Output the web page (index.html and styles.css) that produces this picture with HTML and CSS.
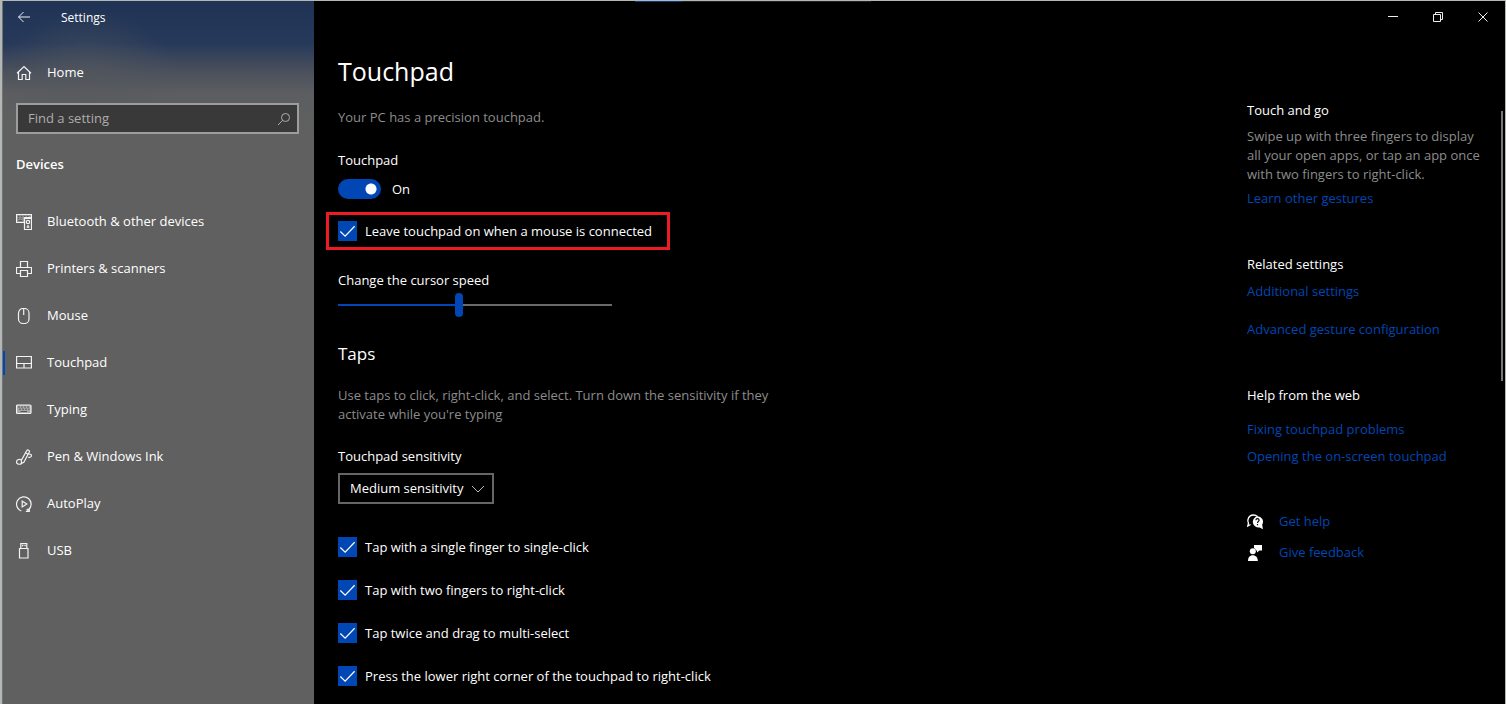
FILE: index.html
```html
<!DOCTYPE html>
<html lang="en">
<head>
<meta charset="utf-8">
<title>Settings</title>
<link rel="stylesheet" href="styles.css">
</head>
<body>
<div class="window">
  <div class="sidebar">
    <header class="side-title">
      <button class="back" aria-label="Back"><svg width="14" height="12" viewBox="0 0 14 12"><path d="M6.500 1L1.500 6l5 5M1.500 6H13"/></svg></button>
      <span>Settings</span>
    </header>
    <a class="nav-item home" href="#"><svg class="icon" viewBox="0 0 16 16"><path d="M1 8.200L8 1.500l7 6.700M2.500 7v7.500h3.700V9.500h3.600v5h3.700V7"/></svg>Home</a>
    <div class="search">
      <input type="text" placeholder="Find a setting" aria-label="Find a setting">
      <svg width="14" height="14" viewBox="0 0 14 14"><circle cx="8.500" cy="5.500" r="4"/><path d="M5.700 8.300L1 13"/></svg>
    </div>
    <h2 class="side-heading">Devices</h2>
    <nav class="nav">
      <a class="nav-item" href="#"><svg class="icon" viewBox="0 0 16 16"><path d="M.5.5h15v3H8.500v5h-8z" fill="#fff" fill-opacity=".3"/><path class="keys" d="M2 2.500h1.500M5 2.500h1.500M8 2.500h1.500M11 2.500h1.500M2 4.500h1M4.500 4.500h1M2.500 6.500h4"/><path d="M8.500 4.500h7v11h-7z"/><circle cx="12" cy="8" r="1.700"/><path d="M12 11v3M10.500 13h3"/></svg>Bluetooth &amp; other devices</a>
      <a class="nav-item" href="#"><svg class="icon" viewBox="0 0 16 16"><path d="M4.500 6.500v-6h7v6M4.500 12.500h-4v-6h15v6h-4M4.500 9.500h7v6h-7z"/></svg>Printers &amp; scanners</a>
      <a class="nav-item" href="#"><svg class="icon" viewBox="0 0 16 16"><rect x="2.500" y=".5" width="10.500" height="15" rx="4.500"/><path d="M7.700 1v6"/></svg>Mouse</a>
      <a class="nav-item active" href="#" aria-current="page"><svg class="icon" viewBox="0 0 16 16"><path d="M.6 1.500h14.800v11.500H.6zM.6 8.500h14.800M8 8.500v4.500"/></svg>Touchpad</a>
      <a class="nav-item" href="#"><svg class="icon" viewBox="0 0 16 16"><rect x=".5" y="3" width="14.500" height="8.500" rx="1" fill="#fff" fill-opacity=".45"/><path class="keys" d="M2 5h2M5 5h2M8 5h2M11 5h2M3 7.200h2M6 7.200h2M9 7.200h2M12 7.200h1.500M4.500 9.500h6.500"/></svg>Typing</a>
      <a class="nav-item" href="#"><svg class="icon" viewBox="0 0 16 16"><path d="M5.500 14.500L5.300 11.500 10.800 1.500c.8-1.200 3.200 0 2.500 1.400L8 13z"/><path d="M5.500 14.500c-2 1.500-5 .6-5-1.400 0-2.300 2.300-3.200 4.700-2.400M12.500 4.800c2.500.3 3.500 1.300 2.900 2.500-.6 1-2.200 1.200-3.200.9M9.500 3.700l2.500 1.500"/></svg>Pen &amp; Windows Ink</a>
      <a class="nav-item" href="#"><svg class="icon" viewBox="0 0 16 16"><path d="M5.300 15A7.300 7.300 0 1 1 12.200 14M9.800 15.400h3.500v-3.600M12.200 14.600L10.800 13M6.200 5v6l4.600-3z"/></svg>AutoPlay</a>
      <a class="nav-item" href="#"><svg class="icon" viewBox="0 0 16 16"><path d="M3.500 5.500h8.500v9.500H3.500zM4.800 5.500V.6h6v4.900M6 2.700h1.300M8.400 2.700h1.300"/></svg>USB</a>
    </nav>
  </div>

  <div class="pane">
    <header class="controls">
      <button aria-label="Minimize"><svg width="12" height="12" viewBox="0 0 12 12"><path d="M1 5.500h10"/></svg></button>
      <button aria-label="Restore"><svg width="12" height="12" viewBox="0 0 12 12"><path d="M1.500 3.500h7v7h-7zM3.500 3.500v-2h7v7h-2"/></svg></button>
      <button aria-label="Close"><svg width="12" height="12" viewBox="0 0 12 12"><path d="M1.500 1.500l9 9M10.500 1.500l-9 9"/></svg></button>
    </header>
    <div class="content">
      <main class="settings">
        <h1>Touchpad</h1>
        <p class="muted intro">Your PC has a precision touchpad.</p>
        <label class="label" for="power">Touchpad</label>
        <div class="toggle-row"><input id="power" class="toggle" type="checkbox" role="switch" checked><span>On</span></div>
        <label class="check highlighted"><input type="checkbox" checked>Leave touchpad on when a mouse is connected</label>
        <label class="label speed-label" for="speed">Change the cursor speed</label>
        <input id="speed" class="slider" type="range" min="0" max="100" value="44">
        <h2>Taps</h2>
        <p class="muted description">Use taps to click, right-click, and select. Turn down the sensitivity if they activate while you're typing</p>
        <label class="label" for="sensitivity">Touchpad sensitivity</label>
        <select id="sensitivity"><option>Medium sensitivity</option></select>
        <div class="checks">
          <label class="check"><input type="checkbox" checked>Tap with a single finger to single-click</label>
          <label class="check"><input type="checkbox" checked>Tap with two fingers to right-click</label>
          <label class="check"><input type="checkbox" checked>Tap twice and drag to multi-select</label>
          <label class="check"><input type="checkbox" checked>Press the lower right corner of the touchpad to right-click</label>
        </div>
      </main>
      <aside class="related">
        <section class="tips">
          <h3>Touch and go</h3>
          <p class="muted">Swipe up with three fingers to display all your open apps, or tap an app once with two fingers to right-click.</p>
          <a href="#">Learn other gestures</a>
        </section>
        <section class="links wide">
          <h3>Related settings</h3>
          <a href="#">Additional settings</a>
          <a href="#">Advanced gesture configuration</a>
        </section>
        <section class="links web">
          <h3>Help from the web</h3>
          <a href="#">Fixing touchpad problems</a>
          <a href="#">Opening the on-screen touchpad</a>
        </section>
        <section class="support">
          <a href="#"><svg width="16" height="16" viewBox="0 0 16 16"><path d="M3.500 10.500L.8 12l.7-3A4.800 4.800 0 0 1 1 5.500C1.700 2.700 4 1 6.500 1c1.700 0 3 .6 4 1.500" fill="none" stroke="#fff" stroke-width="1.300"/><path d="M10.500 2.200a5.500 5.500 0 0 1 4.700 8.300l.7 4.700-3.200-1.700A5.500 5.500 0 1 1 10.500 2.200z" fill="#fff"/><path d="M8.900 6.200c0-2 3.200-2 3.200 0 0 1.200-1.600 1.200-1.600 2.700M10.500 10v1.300" fill="none" stroke="#000" stroke-width="1.200"/></svg>Get help</a>
          <a href="#"><svg width="16" height="16" viewBox="0 0 16 16"><path d="M7 0h8v5.500h-2.500L10 7.500v-2H9A3.800 3.800 0 0 0 7 3z" fill="#fff"/><circle cx="5.800" cy="6.300" r="3" fill="#fff"/><path d="M1 16c0-3.500 1.800-5.700 4.800-5.700s5 2.200 5 5.700z" fill="#fff"/></svg>Give feedback</a>
        </section>
      </aside>
    </div>
    <div class="loading"></div>
    <div class="scrollbar"></div>
  </div>
</div>
</body>
</html>
```
FILE: styles.css
```css
* { box-sizing: border-box; }
body {
  margin: 0;
  background: #000;
  color: #fff;
  font: 13px/19px "Open Sans", "Noto Sans", sans-serif;
}
h1, h2, h3, p { margin: 0; font-weight: 400; }
a { color: #0046b4; text-decoration: none; }
button { border: 0; padding: 0; background: none; color: inherit; font: inherit; }
svg { flex: none; display: block; }
.window {
  display: flex;
  height: 100vh;
  overflow: hidden;
  border: solid #b4b8b5;
  border-width: 1px 1px 0 2px;
}

/* Sidebar */
.sidebar {
  flex: none;
  width: 312px;
  border-left: 1px solid #707474;
  background:
    radial-gradient(ellipse 90px 65px at 85px 75px, #55585d99, #5b5d6000),
    linear-gradient(#203354 0, #26395a 42px, #4a505c 70px, #5b5d60 92px, #606060 130px);
}
.side-title { display: flex; align-items: center; gap: 30px; height: 32px; padding-left: 14px; font-size: 12px; }
.back svg, .controls svg { fill: none; stroke: #eee; stroke-width: 1; }
.back { width: 14px; }
.nav-item { display: flex; align-items: center; gap: 15px; height: 47px; padding-left: 13px; color: #fff; }
.icon { width: 16px; height: 16px; fill: none; stroke: #f2f2f2; stroke-width: 1.200; }
.keys { stroke: #555; stroke-width: 1; }
.home { margin: 16px 0 7px; }
.search { display: flex; align-items: center; height: 31px; margin: 0 15px 0 13px; padding-right: 6px; border: 2px solid #9d9d9d; background: #393939; }
.search input { flex: 1; min-width: 0; padding: 0 10px; border: 0; outline: 0; background: none; color: #fff; font: inherit; }
.search input::placeholder { color: #adadad; opacity: 1; }
.search svg { fill: none; stroke: #adadad; }
.side-heading { margin: 21px 0 24px 13px; font-size: 13px; font-weight: 600; }
.active { background: linear-gradient(#0046b4, #0046b4) 0 50% / 2px 24px no-repeat; }

/* Content pane */
.pane { position: relative; flex: 1; min-width: 0; }
.controls { display: flex; justify-content: flex-end; height: 32px; }
.controls button { display: grid; place-items: center; width: 45px; }
.content { display: flex; justify-content: space-between; padding-left: 24px; }
.settings { display: flex; flex-direction: column; align-items: flex-start; width: 440px; padding-top: 20px; }
.settings h1 { font-size: 25px; line-height: 36px; }
.muted { color: #8c8c8c; }
.intro { margin: 19px 0 24px; }
.toggle-row { display: flex; align-items: center; gap: 11px; height: 20px; margin: 9px 0 13px; }
.toggle { appearance: none; width: 43px; height: 20px; margin: 0; border-radius: 10px; background: radial-gradient(circle at 33px 10px, #fff 5px, #0046b4 6px); }
.check { display: flex; align-items: center; gap: 8px; white-space: nowrap; }
.check input {
  appearance: none;
  width: 19px;
  height: 20px;
  margin: 0;
  background: #0046b4 url("data:image/svg+xml,%3Csvg xmlns='http://www.w3.org/2000/svg' viewBox='0 0 20 20'%3E%3Cpath d='M2.500 10.500l5 5L17.500 5' fill='none' stroke='white' stroke-width='1.300'/%3E%3C/svg%3E") center / 19px 20px;
}
.highlighted { height: 38px; margin-left: -12px; padding: 0 15px 0 9px; border: 3px solid #ed1c24; }
.speed-label { margin-top: 21px; }
.slider { appearance: none; width: 274px; height: 24px; margin: 3px 0 23px; background: linear-gradient(90deg, #0046b4 45%, #6a6a6a 45%) center / 100% 2px no-repeat; }
.slider::-webkit-slider-thumb { appearance: none; width: 8px; height: 24px; border-radius: 4px; background: #0046b4; }
.settings h2 { font-size: 17px; line-height: 28px; }
.description { margin: 18px 0 23px; }
select {
  appearance: none;
  height: 31px;
  margin: 7px 0 33px;
  padding: 0 28px 0 10px;
  border: 2px solid #666;
  border-radius: 0;
  background: #000 url("data:image/svg+xml,%3Csvg xmlns='http://www.w3.org/2000/svg' viewBox='0 0 14 8'%3E%3Cpath d='M1 1l6 6 6-6' fill='none' stroke='%23bbb'/%3E%3C/svg%3E") right 7px center / 14px 8px no-repeat;
  color: #fff;
  font: inherit;
}
.checks { display: flex; flex-direction: column; gap: 23px; }

/* Related links */
.related { flex: none; width: 258px; padding: 68px 18px 0 0; }
.related h3 { font-size: 13px; }
.related a { display: block; }
.tips p { margin: 7px 0 5px; }
.tips { margin-bottom: 47px; }
.links { display: flex; flex-direction: column; }
.wide { gap: 19px; margin-bottom: 47px; }
.wide h3 { margin-bottom: -11px; }
.web { gap: 8px; margin-bottom: 46px; }
.web h3 { margin-bottom: 7px; }
.support { display: grid; gap: 12px; }
.related .support a { display: flex; align-items: center; gap: 16px; }

/* Overlays */
.loading { position: absolute; top: 0; left: 321px; width: 236px; height: 1px; background: linear-gradient(90deg, #0a3b80 47px, #222 47px); }
.scrollbar { position: absolute; top: 110px; right: 2px; width: 2px; height: 270px; background: #777; }
```
